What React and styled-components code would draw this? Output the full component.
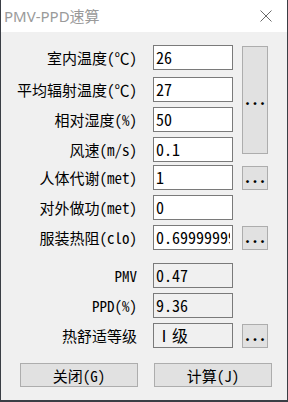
import React from 'react'
import styled, { createGlobalStyle } from 'styled-components'

const GlobalStyle = createGlobalStyle`
  html, body {
    margin: 0;
    padding: 0;
    background: #ffffff;
  }
  * {
    box-sizing: border-box;
  }
`

const uiFont = `"Noto Sans Mono CJK SC", "Noto Sans CJK SC", "DejaVu Sans Mono", monospace`

const Window = styled.div`
  width: 288px;
  height: 402px;
  display: flex;
  flex-direction: column;
  border-left: 1px solid #3a3e45;
  border-right: 1px solid #3a3e45;
  border-bottom: 2px solid #3a3e45;
  background: #f0f0f0;
  font-family: ${uiFont};
  font-size: 15px;
  font-weight: 300;
  color: #000;
`

const TitleBar = styled.div`
  height: 32px;
  flex: 0 0 32px;
  background: #ffffff;
  display: flex;
  align-items: center;
  justify-content: space-between;
  padding: 0 15px 0 3px;
`

const Title = styled.div`
  font-family: "Noto Sans", "Noto Sans CJK SC", sans-serif;
  font-size: 15px;
  font-weight: 400;
  color: #9a9a9a;
  line-height: 1;
`

const CloseIcon = () => (
  <svg width="12" height="12" viewBox="0 0 12 12">
    <path d="M0.5 0.5 L11.5 11.5 M11.5 0.5 L0.5 11.5" stroke="#6a6a6a" strokeWidth="1" fill="none" />
  </svg>
)

const Body = styled.div`
  flex: 1;
  display: flex;
  flex-direction: column;
  padding-top: 13px;
`

const FormGrid = styled.div`
  display: grid;
  grid-template-columns: 152px 80px 9px 26px;
  grid-template-rows: ${p => p.$rows};
  margin-top: ${p => p.$top || 0}px;
`

const Label = styled.div`
  grid-column: 1;
  height: 25px;
  display: flex;
  align-items: center;
  justify-content: flex-end;
  padding-right: 16px;
  white-space: nowrap;
  line-height: 1;
`

const Field = styled.input`
  grid-column: 2;
  width: 80px;
  height: 25px;
  margin: 0;
  padding: 0 2px 2px 2px;
  border: 1px solid #7a7a7a;
  background: ${p => (p.readOnly ? '#f0f0f0' : '#ffffff')};
  font-family: ${uiFont};
  font-size: 16px;
  font-weight: 300;
  color: #000;
  outline: none;
  border-radius: 0;
`

const MoreButton = styled.button`
  grid-column: 4;
  grid-row: ${p => p.$row};
  align-self: start;
  width: 26px;
  height: ${p => p.$height || 24}px;
  margin: 1px 0 0 0;
  padding: 0 0 4px 0;
  border: 1px solid #adadad;
  background: #e1e1e1;
  font-family: ${uiFont};
  font-size: 15px;
  font-weight: bold;
  color: #000;
  line-height: 1;
  letter-spacing: 0;
  border-radius: 0;
`

const Footer = styled.div`
  display: flex;
  gap: 16px;
  padding-left: 19px;
  margin-top: 15px;
`

const DialogButton = styled.button`
  width: 118px;
  height: 24px;
  margin: 0;
  padding: 0;
  border: 1px solid #adadad;
  background: #e1e1e1;
  font-family: ${uiFont};
  font-size: 15px;
  font-weight: 300;
  color: #000;
  line-height: 1;
  border-radius: 0;
`

const inputs = [
  { label: '室内温度(℃)', value: '26' },
  { label: '平均辐射温度(℃)', value: '27' },
  { label: '相对湿度(%)', value: '50' },
  { label: '风速(m/s)', value: '0.1' },
  { label: '人体代谢(met)', value: '1', more: true },
  { label: '对外做功(met)', value: '0' },
  { label: '服装热阻(clo)', value: '0.69999999', more: true },
]

const results = [
  { label: 'PMV', value: '0.47' },
  { label: 'PPD(%)', value: '9.36' },
  { label: '热舒适等级', value: 'Ⅰ级', more: true },
]

export default function App() {
  return (
    <>
      <GlobalStyle />
      <Window>
        <TitleBar>
          <Title>PMV-PPD速算</Title>
          <CloseIcon />
        </TitleBar>
        <Body>
          <FormGrid $rows="32px 30px 30px 28px 30px 30px 25px">
            {inputs.map((it, i) => (
              <React.Fragment key={it.label}>
                <Label style={{ gridRow: i + 1 }}>{it.label}</Label>
                <Field style={{ gridRow: i + 1 }} defaultValue={it.value} />
                {it.more && <MoreButton $row={i + 1}>...</MoreButton>}
              </React.Fragment>
            ))}
            <MoreButton $row="1 / 5" $height={108}>...</MoreButton>
          </FormGrid>
          <FormGrid $rows="30px 30px 25px" $top={13}>
            {results.map((it, i) => (
              <React.Fragment key={it.label}>
                <Label style={{ gridRow: i + 1 }}>{it.label}</Label>
                <Field style={{ gridRow: i + 1 }} readOnly value={it.value} />
                {it.more && <MoreButton $row={i + 1}>...</MoreButton>}
              </React.Fragment>
            ))}
          </FormGrid>
          <Footer>
            <DialogButton>关闭(G)</DialogButton>
            <DialogButton>计算(J)</DialogButton>
          </Footer>
        </Body>
      </Window>
    </>
  )
}
